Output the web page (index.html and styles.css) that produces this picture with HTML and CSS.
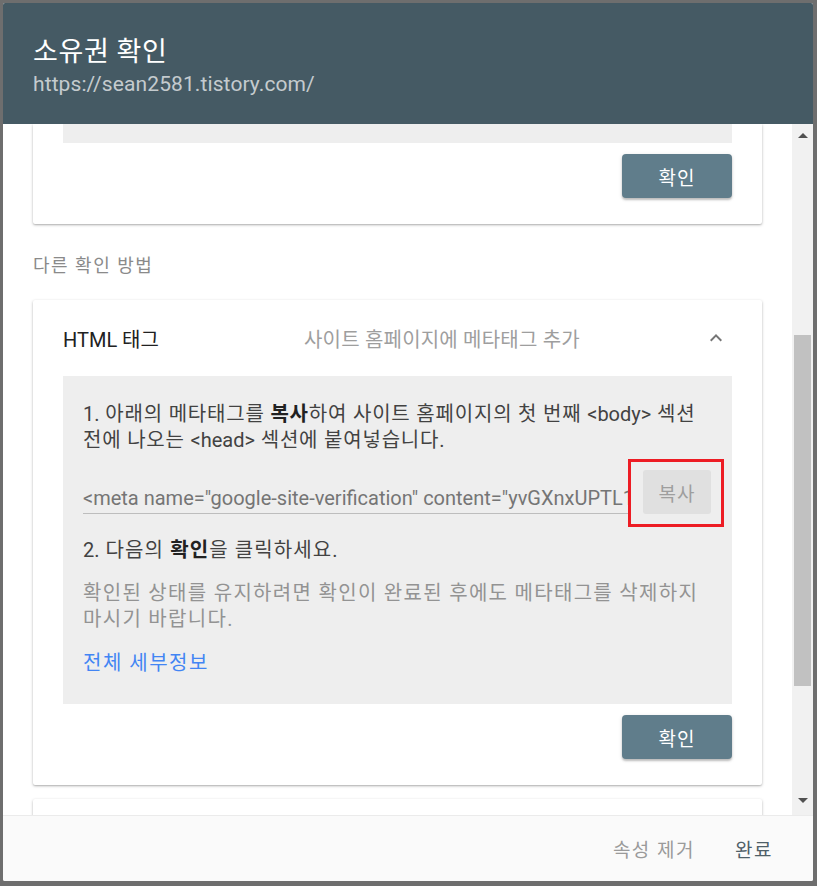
FILE: index.html
```html
<!DOCTYPE html>
<html lang="ko">
<head>
<meta charset="utf-8">
<title>소유권 확인</title>
<link rel="stylesheet" href="styles.css">
</head>
<body>
<div class="dialog">
  <header class="dialog-header">
    <div class="dialog-title">소유권 확인</div>
    <div class="dialog-url">https://sean2581.tistory.com/</div>
  </header>
  <div class="dialog-body">
    <div class="scroll-content">
      <section class="card card-cut">
        <div class="card-inner">
          <div class="grey-box grey-box-cut"></div>
          <div class="actions">
            <button class="btn-primary">확인</button>
          </div>
        </div>
      </section>

      <div class="section-label">다른 확인 방법</div>

      <section class="card">
        <div class="method-head">
          <div class="method-title">HTML 태그</div>
          <div class="method-desc">사이트 홈페이지에 메타태그 추가</div>
          <svg class="chevron" width="24" height="24" viewBox="0 0 24 24"><path d="M12 8l-6 6 1.41 1.41L12 10.83l4.59 4.58L18 14z" fill="#757575"/></svg>
        </div>
        <div class="card-inner">
          <div class="grey-box">
            <p class="step"><span class="latin">1.</span> 아래의 메타태그를 <b>복사</b>하여 사이트 홈페이지의 첫 번째 <span class="latin">&lt;body&gt;</span> 섹션 전에 나오는 <span class="latin">&lt;head&gt;</span> 섹션에 붙여넣습니다.</p>
            <div class="copy-row">
              <div class="meta-input">&lt;meta name="google-site-verification" content="yvGXnxUPTL1WkUqkq0o_Lb6OtyIKMcx_example" /&gt;</div>
              <div class="copy-wrap">
                <button class="btn-copy">복사</button>
                <span class="highlight"></span>
              </div>
            </div>
            <p class="step step2"><span class="latin">2.</span> 다음의 <b>확인</b>을 클릭하세요.</p>
            <p class="note">확인된 상태를 유지하려면 확인이 완료된 후에도 메타태그를 삭제하지 마시기 바랍니다.</p>
            <a class="details" href="#">전체 세부정보</a>
          </div>
          <div class="actions">
            <button class="btn-primary">확인</button>
          </div>
        </div>
      </section>

      <section class="card card-next"></section>
    </div>
    <div class="scrollbar">
      <span class="arrow-up"></span>
      <span class="track-space"></span>
      <span class="thumb"></span>
      <span class="track-space2"></span>
      <span class="arrow-down"></span>
    </div>
  </div>
  <footer class="dialog-footer">
    <button class="btn-text btn-muted">속성 제거</button>
    <button class="btn-text btn-done">완료</button>
  </footer>
</div>
</body>
</html>
```

FILE: styles.css
```css
* { box-sizing: border-box; }
html, body { margin: 0; padding: 0; }
body {
  background: #6e6e6e;
  padding: 3px 4px 5px 3px;
  font-family: Roboto, "Noto Sans CJK KR", sans-serif;
  width: 817px;
  height: 886px;
  overflow: hidden;
}
.dialog {
  width: 810px;
  height: 878px;
  background: #fff;
  border-radius: 2px;
  overflow: hidden;
  display: flex;
  flex-direction: column;
}
.dialog-header {
  height: 121px;
  flex-shrink: 0;
  background: #455a64;
  padding: 33px 30px 0;
}
.dialog-title {
  color: #fff;
  font-size: 27px;
  line-height: 32px;
  letter-spacing: 0.6px;
}
.dialog-url {
  color: rgba(255,255,255,0.7);
  font-size: 21px;
  line-height: 26px;
  margin-top: 3px;
  letter-spacing: 0.1px;
}
.dialog-body {
  flex: 1;
  display: flex;
  min-height: 0;
}
.scroll-content {
  flex: 1;
  overflow: hidden;
  padding: 0 30px;
}
.card {
  background: #fff;
  border-radius: 2px;
  box-shadow: 0 1px 3px rgba(0,0,0,0.28), 0 1px 1px rgba(0,0,0,0.08);
}
.card-cut { border-radius: 0 0 2px 2px; }
.card-inner { padding: 0 30px 26px; }
.grey-box {
  background: #eeeeee;
  padding: 25px 20px 28px;
}
.grey-box-cut { height: 19px; padding: 0; }
.actions {
  display: flex;
  justify-content: flex-end;
  margin-top: 11px;
}
.btn-primary {
  width: 110px;
  height: 44px;
  border: 0;
  border-radius: 4px;
  background: #607d8b;
  color: #fff;
  font-family: inherit;
  font-size: 19px;
  letter-spacing: 1px;
  box-shadow: 0 2px 2px rgba(0,0,0,0.2), 0 1px 4px rgba(0,0,0,0.12);
}
.section-label {
  color: #8a8a8a;
  font-size: 18px;
  line-height: 24px;
  letter-spacing: 1.5px;
  margin: 30px 0 22px;
}
.method-head {
  height: 76px;
  display: flex;
  align-items: center;
  padding: 0 34px 0 30px;
}
.method-title {
  width: 241px;
  flex-shrink: 0;
  color: #212121;
  font-size: 20px;
}
.method-desc {
  flex: 1;
  color: #9e9e9e;
  font-size: 20px;
  letter-spacing: 0.2px;
}
.chevron { flex-shrink: 0; }
.step, .note {
  margin: 0;
  font-size: 20px;
  line-height: 26px;
  color: #424242;
  letter-spacing: 0.8px;
  word-break: keep-all;
}
.latin { letter-spacing: 0; }
.step b { color: #212121; font-weight: 700; }
.copy-row {
  display: flex;
  align-items: flex-end;
  margin-top: 17px;
}
.meta-input {
  width: 545px;
  flex-shrink: 0;
  font-size: 20px;
  line-height: 26px;
  color: #757575;
  white-space: nowrap;
  overflow: hidden;
  border-bottom: 1px solid #bdbdbd;
  padding-bottom: 2px;
}
.copy-wrap {
  position: relative;
  margin-left: 15px;
}
.btn-copy {
  display: block;
  width: 68px;
  height: 44px;
  border: 0;
  border-radius: 3px;
  background: #e0e0e0;
  color: #9e9e9e;
  font-family: inherit;
  font-size: 19px;
  letter-spacing: 1px;
}
.highlight {
  position: absolute;
  left: -15px;
  top: -11px;
  width: 96px;
  height: 68px;
  border: 3px solid #ed1c24;
}
.step2 { margin-top: 23px; letter-spacing: 1.1px; }
.note {
  margin-top: 17px;
  color: #939393;
  letter-spacing: 1.3px;
}
.details {
  display: block;
  margin-top: 18px;
  font-size: 20px;
  line-height: 26px;
  letter-spacing: 1.5px;
  color: #4285f4;
  text-decoration: none;
}
.card-next {
  height: 40px;
  margin-top: 14px;
}
.scrollbar {
  width: 21px;
  flex-shrink: 0;
  background: #f1f1f1;
  display: flex;
  flex-direction: column;
  align-items: center;
}
.arrow-up {
  margin-top: 9px;
  width: 0; height: 0;
  border-left: 5px solid transparent;
  border-right: 5px solid transparent;
  border-bottom: 5px solid #505050;
}
.track-space { height: 197px; }
.thumb {
  width: 17px;
  height: 351px;
  background: #c1c1c1;
}
.track-space2 { height: 112px; }
.arrow-down {
  width: 0; height: 0;
  border-left: 5px solid transparent;
  border-right: 5px solid transparent;
  border-top: 5px solid #505050;
}
.dialog-footer {
  height: 66px;
  flex-shrink: 0;
  background: #fafafa;
  border-top: 1px solid #ebebeb;
  display: flex;
  justify-content: flex-end;
  align-items: center;
  padding-right: 28px;
  position: relative;
}
.btn-text {
  border: 0;
  background: transparent;
  font-family: inherit;
  font-size: 19px;
  letter-spacing: 1.5px;
  padding: 8px 12px;
}
.btn-muted { color: #9a9a9a; }
.btn-done { color: #4f5f68; margin-left: 16px; }
```
